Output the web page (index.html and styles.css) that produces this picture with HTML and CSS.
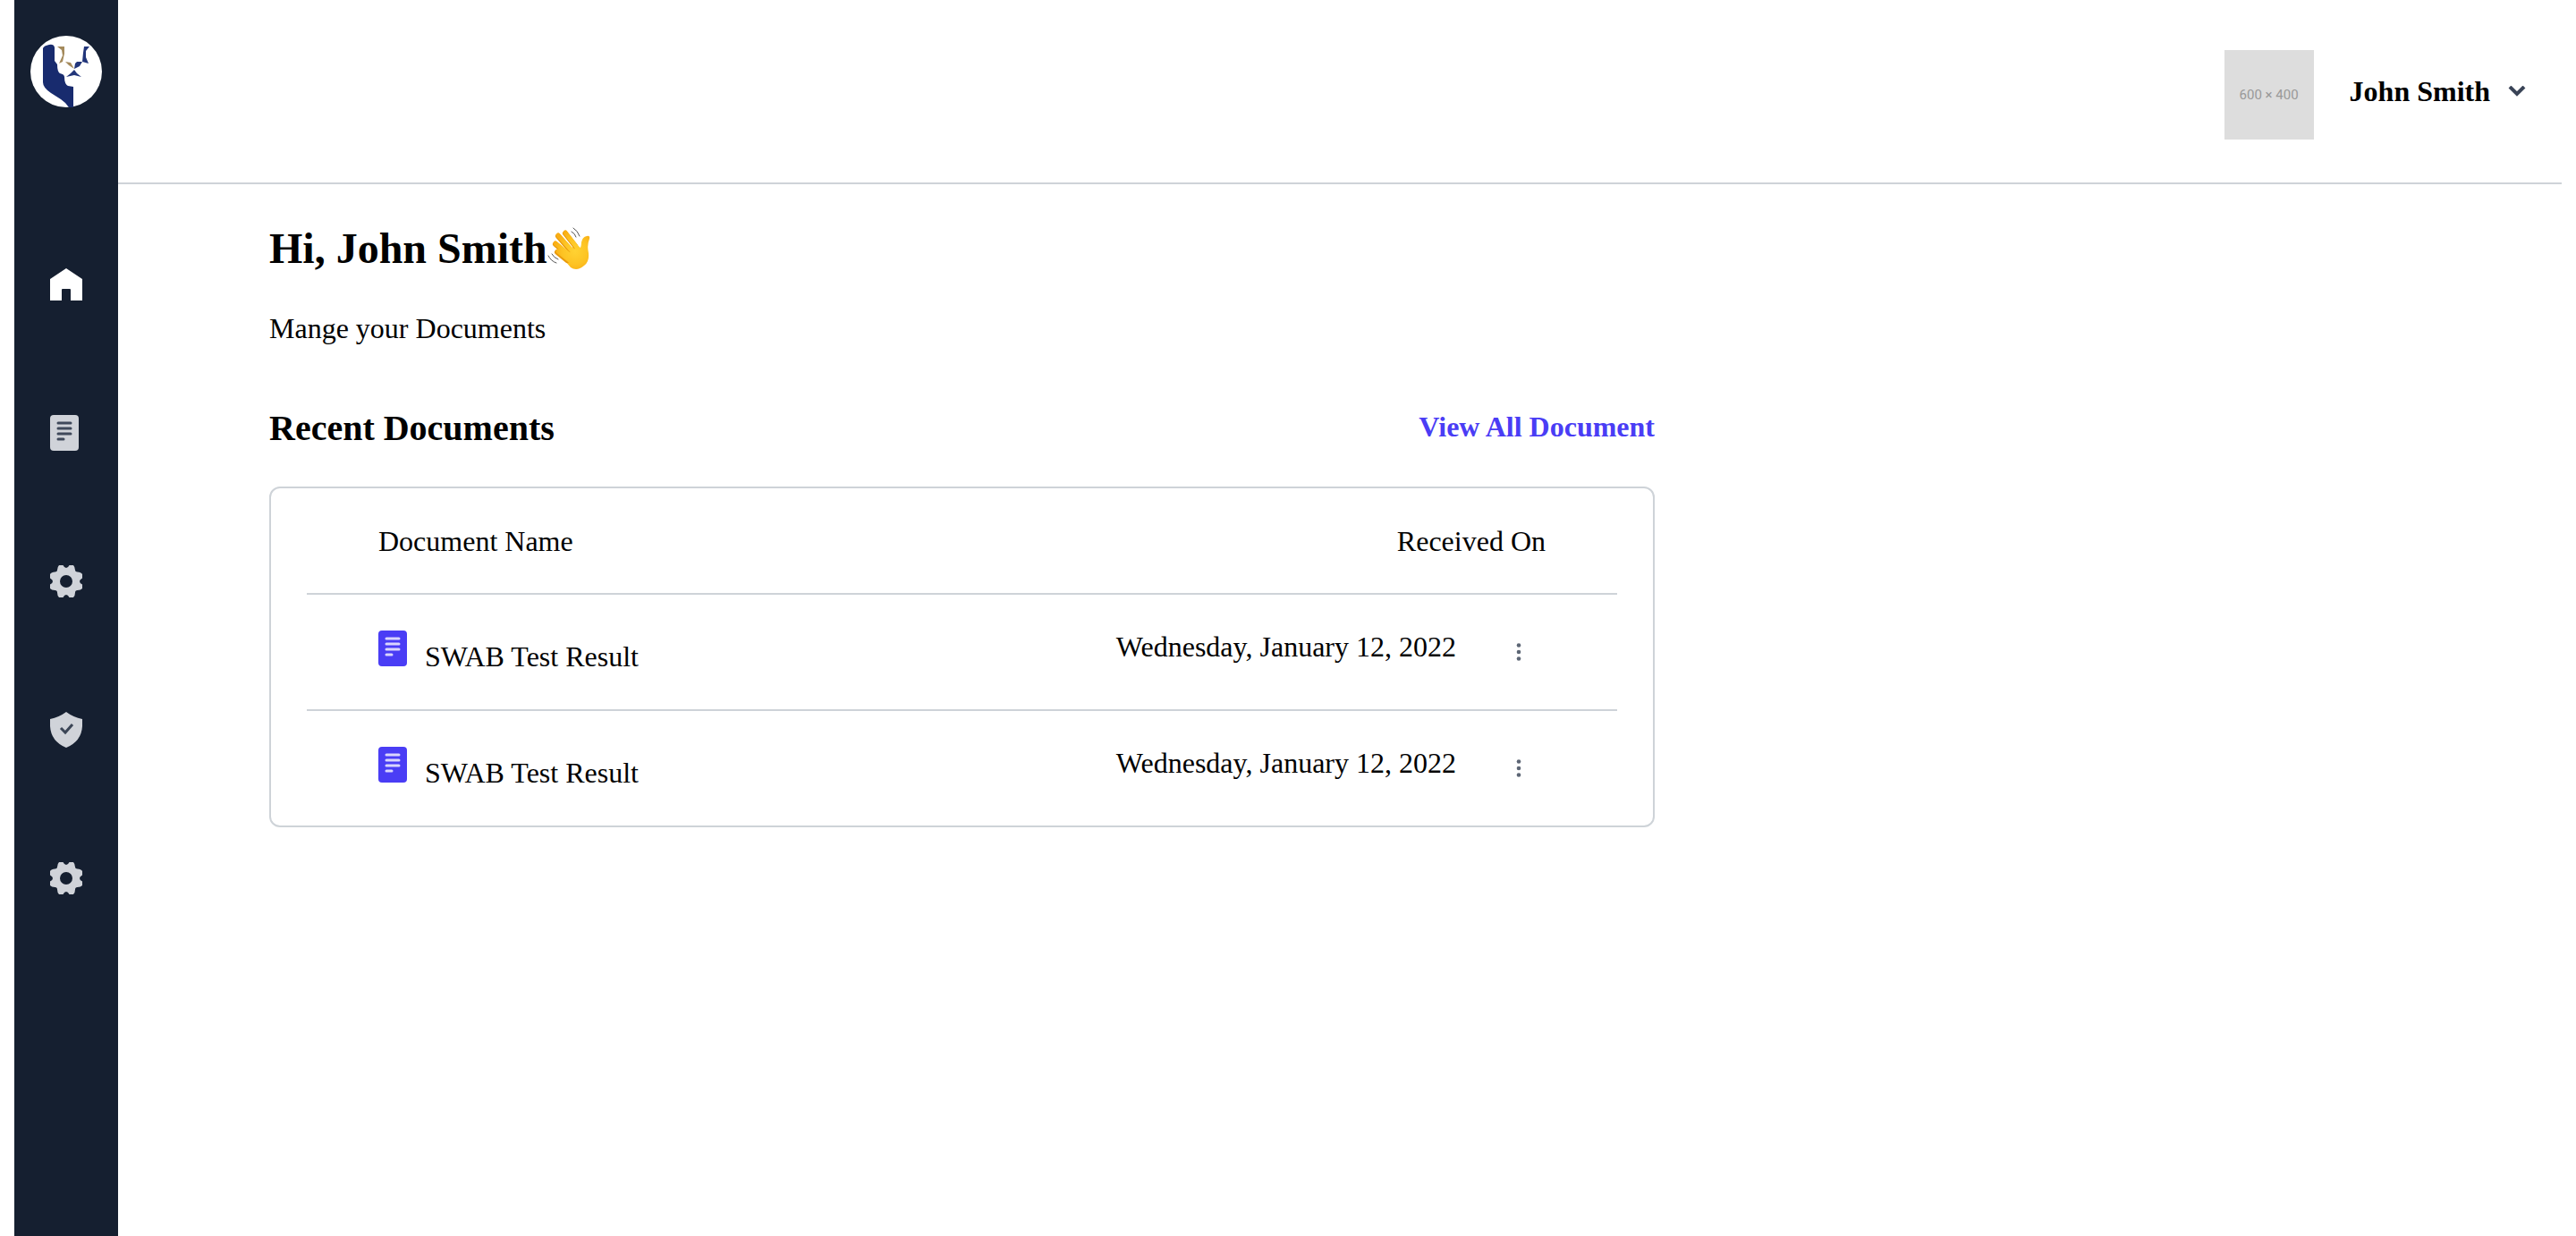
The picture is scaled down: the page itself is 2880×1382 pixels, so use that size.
FILE: index.html
```html
<!DOCTYPE html>
<html lang="en">
<head>
<meta charset="utf-8">
<meta name="viewport" content="width=device-width, initial-scale=1">
<title>Documents</title>
<link rel="stylesheet" href="styles.css">
</head>
<body>
<svg class="sprite" aria-hidden="true">
  <symbol id="icon-doc" viewBox="0 0 32 40">
    <rect width="32" height="40" rx="4" fill="currentColor"/>
    <path class="doc-lines" d="M9 9h14M9 15h14M9 21h14M9 27h6"/>
  </symbol>
  <symbol id="icon-gear" viewBox="0 0 36 36">
    <path fill="currentColor" fill-rule="evenodd" d="M10 0h4.500q1.500 3 3.500 3t3.500-3H26q2 2 2 5.500 0 2 2.500 2 4 0 5.500 2.500v4.500q-3 1.500-3 3.500t3 3.500V26q-1.500 2-5.500 2-2.500 0-2.500 2.500Q28 34 26 36h-4.500q-1.500-3-3.500-3t-3.500 3H10q-2-2-2-5.500Q8 28 5.500 28 1.500 28 0 26v-4.500q3-1.500 3-3.500t-3-3.500V10q1.500-2.500 5.500-2.500 2.500 0 2.500-2Q8 2 10 0zM18 11a7 7 0 1 0 0 14a7 7 0 1 0 0-14z"/>
  </symbol>
  <symbol id="icon-dots" viewBox="0 0 6 20">
    <circle cx="3" cy="2.500" r="2.300"/><circle cx="3" cy="10" r="2.300"/><circle cx="3" cy="17.500" r="2.300"/>
  </symbol>
</svg>
<div class="app">
  <aside class="sidebar">
    <a class="logo" href="#" aria-label="Home page">
      <svg viewBox="0 0 80 80" width="80" height="80" aria-hidden="true">
        <circle cx="40" cy="40" r="40" fill="#fff"/>
        <path fill="#182b6e" d="M14 14Q15 11 21 10Q26 9 27 13V28L30 32Q30 40 33 42Q38 43 38 46Q38 54 42 56L48 57V80H43Q40 75 34 71L23 64Q14 58 14 52z"/>
        <path fill="#a48a5c" d="M30 12h8v8l-2 9-4 2 4-9-1-6zM39 29l6 1 4 7-6-4z"/>
        <path fill="#22357a" d="M60 12h6l-4 5v7l3 7-7-2 1-10zM52 29h6l-3 5-6 3 1-6zM49 38l3 4 5 4-8-2-9 2 5-4z"/>
      </svg>
    </a>
    <nav class="nav" aria-label="Main">
      <a class="nav-item active" href="#" aria-label="Home">
        <svg viewBox="0 0 36 36" width="36" height="36" aria-hidden="true"><path fill="currentColor" d="M18 0L36 12V36H23V24Q23 23 22 23H14Q13 23 13 24V36H0V12z"/></svg>
      </a>
      <a class="nav-item" href="#" aria-label="Documents">
        <svg width="32" height="40" aria-hidden="true"><use href="#icon-doc"/></svg>
      </a>
      <a class="nav-item" href="#" aria-label="Settings">
        <svg width="36" height="36" aria-hidden="true"><use href="#icon-gear"/></svg>
      </a>
      <a class="nav-item" href="#" aria-label="Security">
        <svg viewBox="0 0 36 40" width="36" height="40" aria-hidden="true">
          <path fill="currentColor" d="M18 0Q26 6 36 8V16Q35 33 18 40Q1 33 0 16V8Q10 6 18 0z"/>
          <path d="M12 18l5 5 8-9" fill="none" stroke="#3b4556" stroke-width="3"/>
        </svg>
      </a>
      <a class="nav-item" href="#" aria-label="Preferences">
        <svg width="36" height="36" aria-hidden="true"><use href="#icon-gear"/></svg>
      </a>
    </nav>
  </aside>
  <div class="main">
    <header class="topbar">
      <div class="avatar">600 × 400</div>
      <button class="user" type="button">
        John Smith
        <svg viewBox="0 0 20 12" width="20" height="12" aria-hidden="true"><path d="M2 1l8 8 8-8" fill="none" stroke="#3a4457" stroke-width="4"/></svg>
      </button>
    </header>
    <main class="content">
      <h1 class="greeting">Hi, John Smith<svg viewBox="0 0 48 48" width="48" height="48" role="img" aria-label="Waving hand">
          <defs>
            <radialGradient id="skin" gradientUnits="userSpaceOnUse" cx="31" cy="27" r="24">
              <stop offset="0" stop-color="#ffd233"/><stop offset="0.6" stop-color="#fdc323"/><stop offset="1" stop-color="#f9ae14"/>
            </radialGradient>
          </defs>
          <path fill="url(#skin)" d="M22 33L24 27 30 20 34 21 37 23Q38 20 38 17Q39 11 44 10Q48 9 47 13Q44 20 46 29Q47 39 41 43Q33 50 26 45L20 38z"/>
          <g fill="none" stroke-linecap="round">
            <path stroke="#e99a0b" stroke-width="6" d="M11 28l11 9M9 19l14 12M12 10l13 15M20 7l11 14"/>
            <path stroke="url(#skin)" stroke-width="5" d="M12 27l14 11M9 18l18 15M12 9l17 19M20 6l14 18"/>
          </g>
          <path fill="none" stroke="#555" stroke-linecap="round" d="M29 1q5 3 7 9M27 5q4 2 5 6M5 30q2 4 7 6M1 32q3 6 9 8"/>
        </svg></h1>
      <p class="intro">Mange your Documents</p>
      <section>
        <div class="section-head">
          <h2>Recent Documents</h2>
          <a href="#">View All Document</a>
        </div>
        <div class="card">
          <table>
            <thead>
              <tr><th scope="col">Document Name</th><th scope="col" colspan="2" class="received">Received On</th></tr>
            </thead>
            <tbody>
              <tr>
                <td class="name"><svg width="32" height="40" aria-hidden="true"><use href="#icon-doc"/></svg>SWAB Test Result</td>
                <td class="date">Wednesday, January 12, 2022</td>
                <td class="actions"><button type="button" aria-label="More actions"><svg width="6" height="20" aria-hidden="true"><use href="#icon-dots"/></svg></button></td>
              </tr>
              <tr>
                <td class="name"><svg width="32" height="40" aria-hidden="true"><use href="#icon-doc"/></svg>SWAB Test Result</td>
                <td class="date">Wednesday, January 12, 2022</td>
                <td class="actions"><button type="button" aria-label="More actions"><svg width="6" height="20" aria-hidden="true"><use href="#icon-dots"/></svg></button></td>
              </tr>
            </tbody>
          </table>
        </div>
      </section>
    </main>
  </div>
</div>
</body>
</html>
```
FILE: styles.css
```css
* {
  box-sizing: border-box;
}

body {
  margin: 0 16px;
  background: #fff;
  color: #000;
  font: 32px/36px "Liberation Serif", "Times New Roman", serif;
}

h1, h2, p {
  margin: 0;
}

button {
  border: 0;
  padding: 0;
  background: none;
  color: inherit;
  font: inherit;
  cursor: pointer;
}

.sprite {
  display: none;
}

.app {
  display: flex;
  min-height: 100vh;
}

/* Sidebar */
.sidebar {
  flex: none;
  width: 116px;
  padding-top: 40px;
  background: #151f30;
}

.logo {
  display: block;
  width: 80px;
  margin: 0 auto 115px 18px;
}

.logo svg,
.nav-item svg {
  display: block;
}

.nav-item {
  display: flex;
  align-items: center;
  height: 166px;
  padding-left: 40px;
  color: #d0d3d9;
  --lines: #3f495b;
}

.nav-item.active {
  color: #fff;
}

.doc-lines {
  fill: none;
  stroke: var(--lines);
  stroke-width: 3;
  stroke-linecap: round;
}

/* Top bar */
.main {
  flex: 1;
  min-width: 0;
}

.topbar {
  display: flex;
  justify-content: flex-end;
  align-items: center;
  gap: 40px;
  padding: 56px 40px 48px;
  border-bottom: 2px solid #ced3d8;
}

.avatar {
  display: flex;
  align-items: center;
  justify-content: center;
  width: 100px;
  height: 100px;
  background: #ddd;
  color: #999;
  font: 15px/20px Roboto, sans-serif;
  white-space: nowrap;
}

.user {
  display: flex;
  align-items: center;
  gap: 20px;
  margin-bottom: 8px;
  font-weight: bold;
}

/* Content */
.content {
  max-width: 1718px;
  padding: 44px 0 44px 169px;
}

.greeting {
  display: flex;
  align-items: center;
  font-size: 48px;
  line-height: 56px;
}

.intro {
  margin: 43px 0 72px;
}

.section-head {
  display: flex;
  justify-content: space-between;
  margin-bottom: 43px;
}

.section-head h2 {
  font-size: 40px;
  line-height: 44px;
}

.section-head a {
  color: #4a3df5;
  font-weight: bold;
  line-height: 40px;
  text-decoration: none;
}

.card {
  padding: 0 40px;
  border: 2px solid #ced3d8;
  border-radius: 12px;
}

table {
  width: 100%;
  border-spacing: 0;
}

th {
  height: 119px;
  padding: 0 80px;
  border-bottom: 2px solid #ced3d8;
  font-weight: normal;
  text-align: left;
}

.received {
  text-align: right;
}

td {
  padding: 40px 0;
  vertical-align: top;
}

tr:not(:last-child) td {
  border-bottom: 2px solid #ced3d8;
}

.name {
  padding-left: 80px;
  --lines: #d9d5fd;
}

.name svg {
  margin-right: 20px;
  color: #4a3df5;
}

.date {
  padding-right: 40px;
  text-align: right;
}

.actions {
  width: 140px;
  padding-right: 80px;
}

.actions button {
  display: flex;
  align-items: center;
  justify-content: center;
  width: 60px;
  height: 48px;
}

.actions svg {
  fill: #5d6675;
}
```
